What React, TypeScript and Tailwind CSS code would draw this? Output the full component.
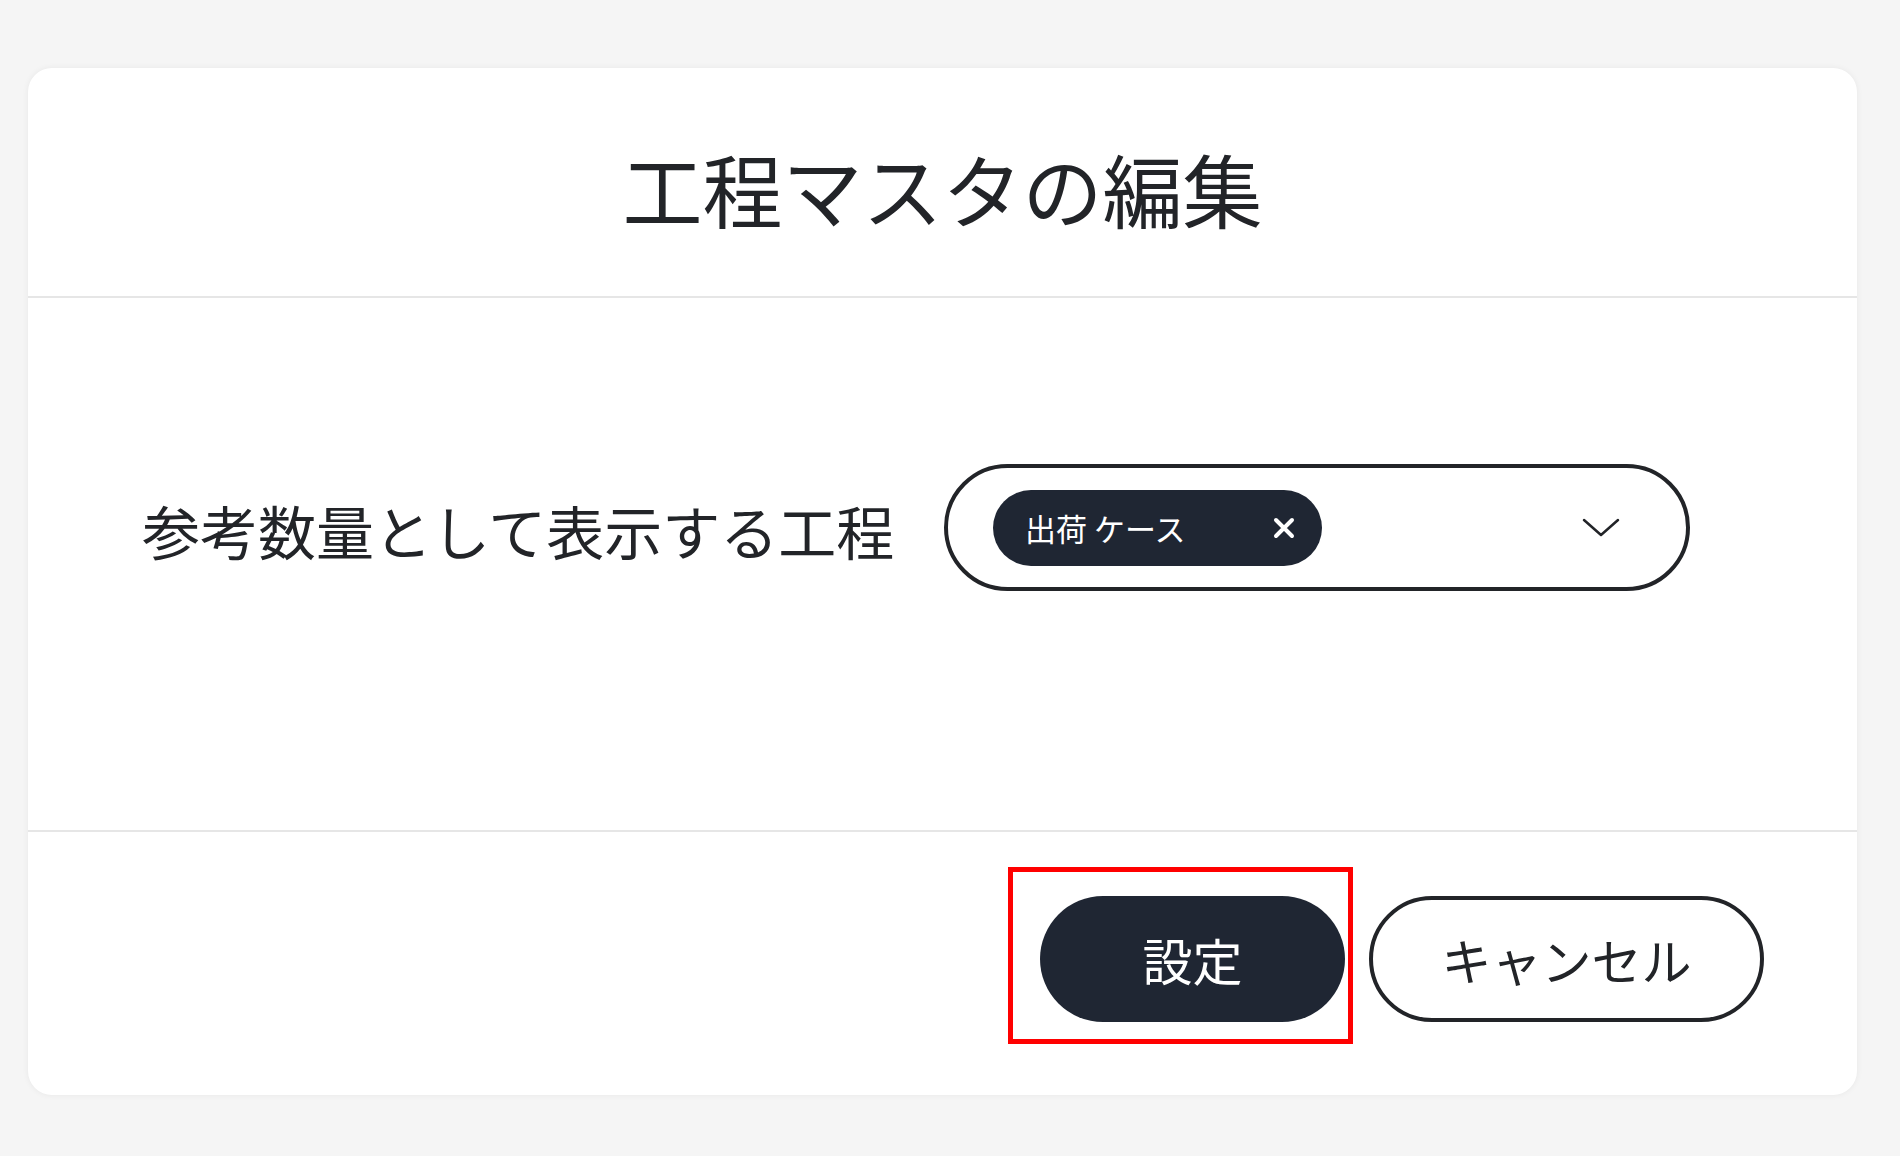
import React from "react";

const font = { fontFamily: '"Noto Sans CJK JP", "Noto Sans", sans-serif' };

export default function App() {
  return (
    <div
      className="min-h-screen w-full bg-[#f5f5f5] pt-[68px] pl-[28px]"
      style={font}
    >
      <div className="flex h-[1027px] w-[1829px] flex-col rounded-[24px] bg-white shadow-[0_0_6px_rgba(0,0,0,0.06)]">
        {/* Header */}
        <div className="flex h-[230px] items-center justify-center border-b-2 border-[#e6e6e6] pt-[10px]">
          <h1 className="text-[80px] leading-none font-normal text-[#222428]">
            工程マスタの編集
          </h1>
        </div>

        {/* Body */}
        <div className="flex h-[534px] items-start border-b-2 border-[#e6e6e6] pl-[114px] pt-[166px]">
          <div className="flex items-center">
            <span className="w-[802px] text-[58px] leading-none text-[#222428] pt-[4px]">
              参考数量として表示する工程
            </span>
            <div className="flex h-[127px] w-[746px] items-center justify-between rounded-full border-4 border-[#222428] pl-[45px] pr-[66px]">
              <div className="flex h-[76px] w-[329px] items-center justify-between rounded-full bg-[#1f2633] pl-[32px] pr-[26px]">
                <span className="text-[31px] leading-none text-white">出荷 ケース</span>
                <svg width="24" height="24" viewBox="0 0 24 24" fill="none">
                  <path d="M4 4 L20 20 M20 4 L4 20" stroke="white" strokeWidth="4" strokeLinecap="round" />
                </svg>
              </div>
              <svg width="38" height="20" viewBox="0 0 38 20" fill="none">
                <path d="M2 2 L19 17 L36 2" stroke="#222428" strokeWidth="2.5" strokeLinecap="round" strokeLinejoin="round" />
              </svg>
            </div>
          </div>
        </div>

        {/* Footer */}
        <div className="flex flex-1 items-start justify-end pt-[64px] pr-[93px]">
          <div className="flex gap-[24px]">
            <div className="relative">
              <div className="pointer-events-none absolute -left-[32px] -right-[8px] -top-[29px] -bottom-[22px] border-[5px] border-[#ff0000]" />
              <button className="flex h-[126px] w-[305px] items-center justify-center rounded-full bg-[#1f2633] text-[50px] leading-none text-white">
                設定
              </button>
            </div>
            <button className="flex h-[126px] w-[395px] items-center justify-center rounded-full border-4 border-[#222428] bg-white text-[50px] leading-none text-[#222428]">
              キャンセル
            </button>
          </div>
        </div>
      </div>
    </div>
  );
}
